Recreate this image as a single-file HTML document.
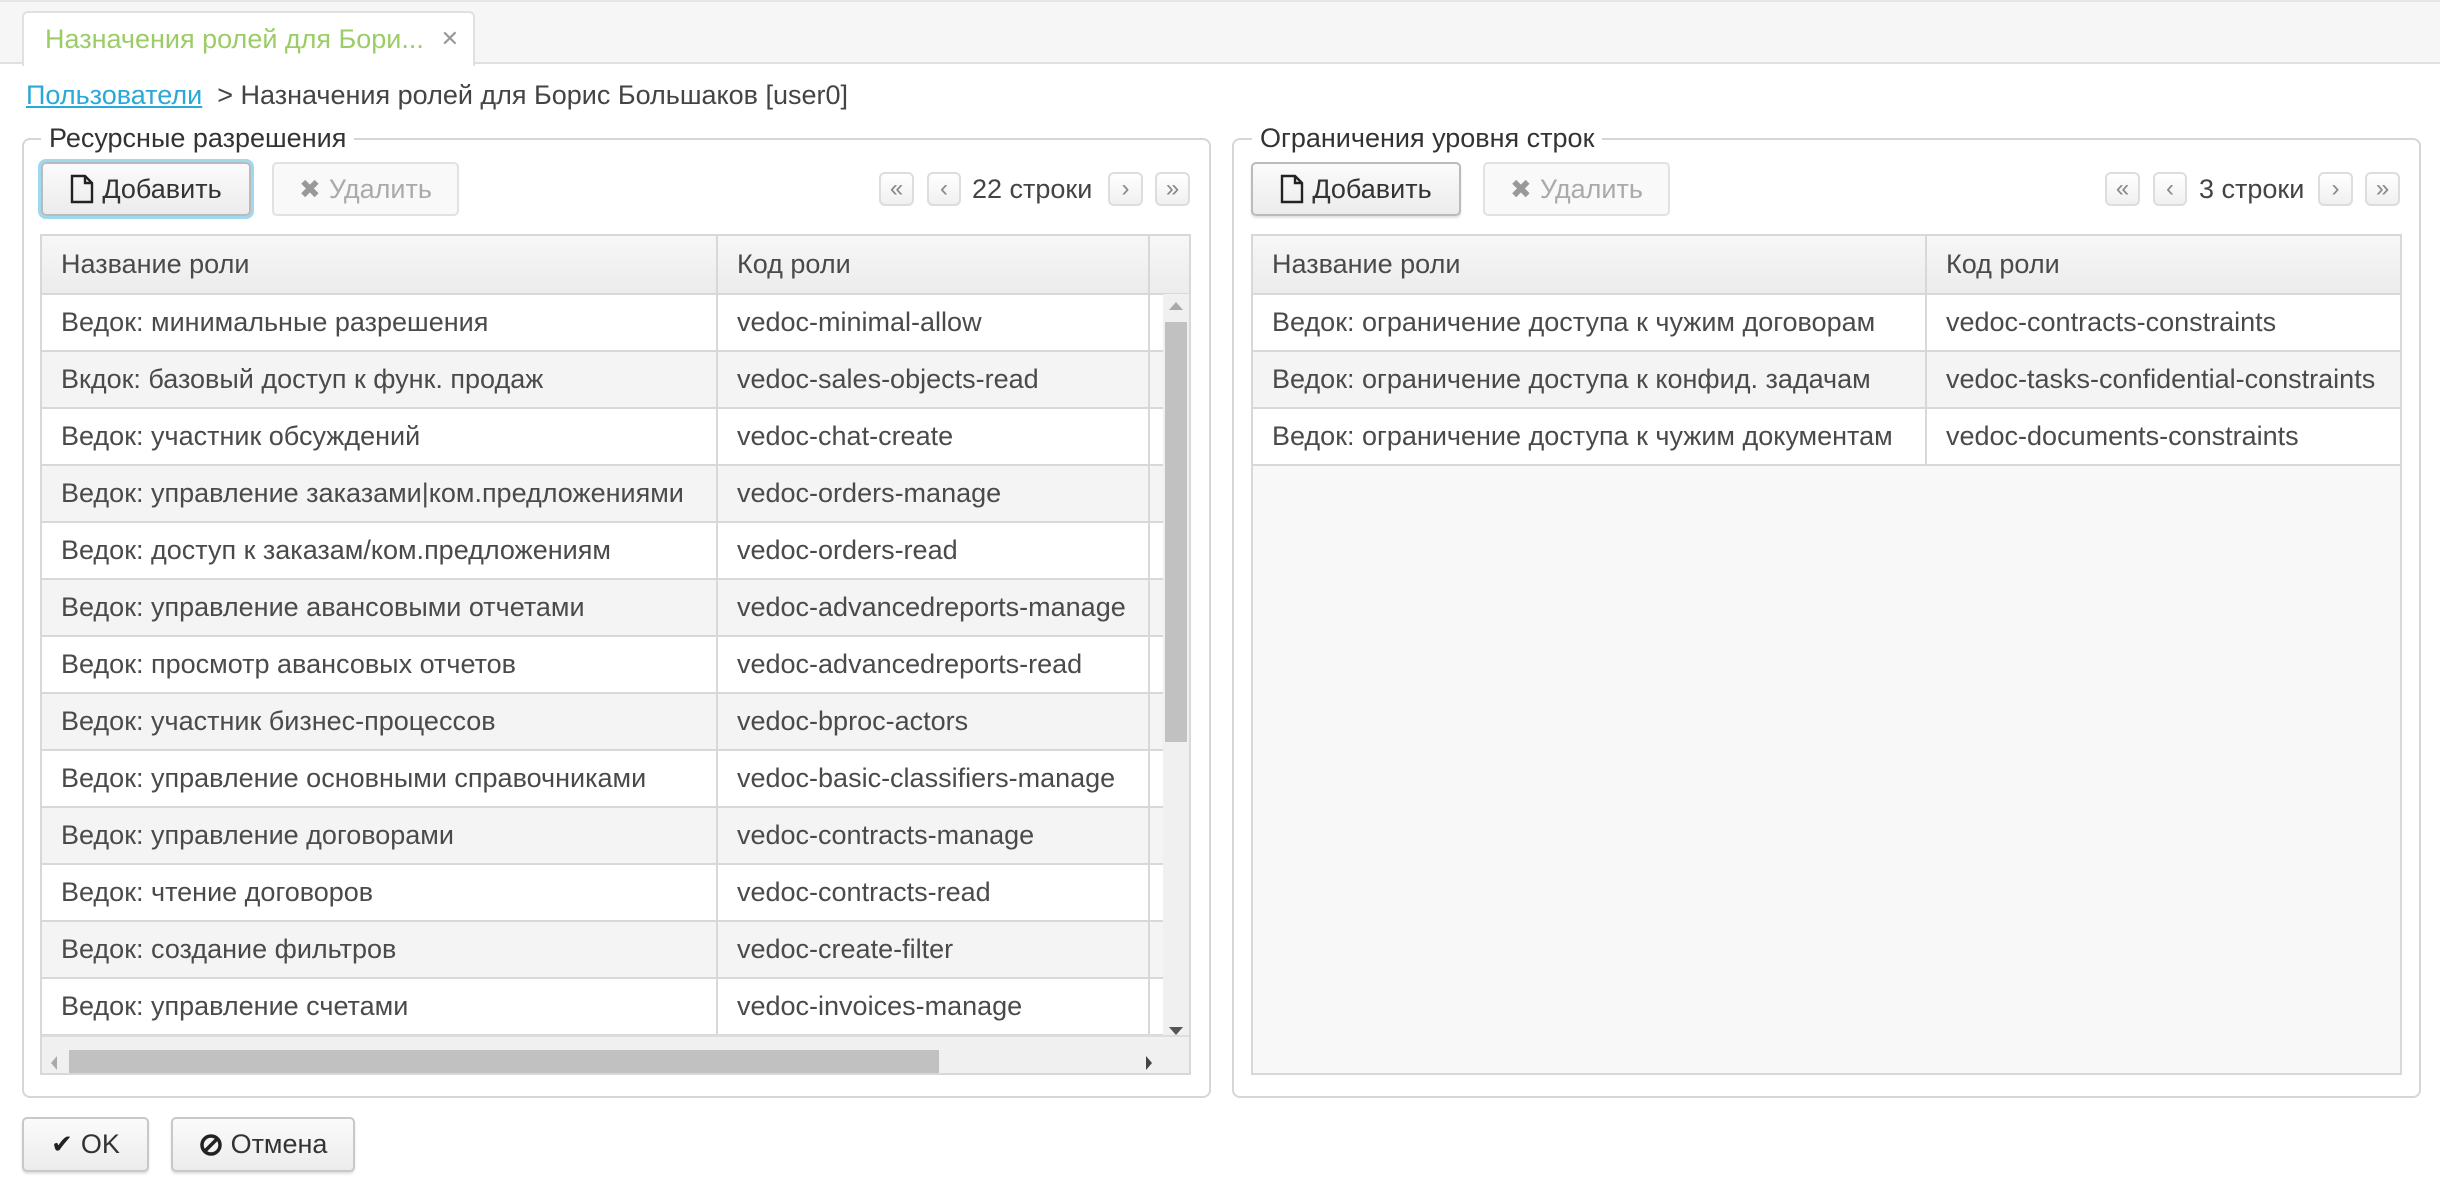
<!DOCTYPE html>
<html><head><meta charset="utf-8"><style>
*{box-sizing:border-box;margin:0;padding:0}
body{width:2440px;height:1189px;background:#fff;font-family:"Liberation Sans","DejaVu Sans",sans-serif;color:#4a4a4a;position:relative;overflow:hidden}
.a{position:absolute}
.tabbar{left:0;top:0;width:2440px;height:64px;background:#f6f6f6;border-bottom:2px solid #e0e0e0;border-top:2px solid #e6e6e6}
.tab{left:22px;top:11px;width:453px;height:55px;background:#fff;border:2px solid #e0e0e0;border-bottom:none;border-radius:6px 6px 0 0;font-size:27px;color:#9ccc65;padding:11px 0 0 21px;white-space:nowrap}
.tab span{position:absolute;right:14px;top:13px;color:#999;font-size:22px}
.fs{border:2px solid #d6d6d6;border-radius:8px}
.leg{background:#fff;font-size:27px;color:#333;padding:0 8px;line-height:32px}
.btn{border:2px solid #c8c8c8;border-radius:5px;background:linear-gradient(#fbfbfb,#ececec);font-size:27px;color:#333;display:flex;align-items:center;justify-content:center;gap:8px;box-shadow:0 2px 2px rgba(0,0,0,.12)}
.btn.dis{color:#aaa;border-color:#e2e2e2;background:#f9f9f9;box-shadow:none}
.pb{border:2px solid #ddd;border-radius:6px;background:linear-gradient(#fff,#f0f0f0);font-size:24px;color:#888;text-align:center;line-height:30px}
.pt{font-size:27px;color:#444;line-height:34px}
table{border-collapse:collapse;font-size:27px;color:#4a4a4a;table-layout:fixed}
td,th{border:2px solid #d8d8d8;padding:0 0 0 19px;text-align:left;font-weight:normal;white-space:nowrap;overflow:hidden;height:57px}
th{height:59px;background:linear-gradient(#f7f7f7,#ececec)}
tr:nth-child(odd) td{background:#f4f4f4}
</style></head><body>
<div class="a tabbar"></div>
<div class="a tab">Назначения ролей для Бори...<span>✕</span></div>
<div class="a" style="left:26px;top:78px;font-size:27px;line-height:34px;white-space:nowrap"><span style="color:#2aa8d8;text-decoration:underline">Пользователи</span><span style="color:#444"> &nbsp;&gt; Назначения ролей для Борис Большаков [user0]</span></div>

<!-- left -->
<div class="a fs" style="left:22px;top:138px;width:1189px;height:960px"></div>
<div class="a leg" style="left:41px;top:122px">Ресурсные разрешения</div>
<div class="a btn" style="left:41px;top:162px;width:210px;height:54px;border-color:#bbb;box-shadow:0 0 0 3px #9fd8ef">
<svg width="24" height="30" viewBox="0 0 24 30"><path d="M2 2h13l7 7v19H2z M15 2v7h7" fill="none" stroke="#222" stroke-width="2.4"/></svg>Добавить</div>
<div class="a btn dis" style="left:272px;top:162px;width:187px;height:54px"><span style="font-size:26px;color:#999">✖</span>Удалить</div>
<div class="a pb" style="left:879px;top:172px;width:35px;height:34px">«</div>
<div class="a pb" style="left:927px;top:172px;width:34px;height:34px">‹</div>
<div class="a pt" style="left:972px;top:172px">22 строки</div>
<div class="a pb" style="left:1108px;top:172px;width:35px;height:34px">›</div>
<div class="a pb" style="left:1155px;top:172px;width:35px;height:34px">»</div>

<div class="a" style="left:40px;top:234px;width:1151px;height:841px;border:2px solid #d8d8d8;overflow:hidden;background:#fff">
<table style="width:1150px;margin:-2px 0 0 -2px">
<colgroup><col style="width:676px"><col style="width:432px"><col style="width:42px"></colgroup>
<tr><th>Название роли</th><th>Код роли</th><th style="padding:0"></th></tr>
<tr><td>Ведок: минимальные разрешения</td><td>vedoc-minimal-allow</td><td></td></tr>
<tr><td>Вкдок: базовый доступ к функ. продаж</td><td>vedoc-sales-objects-read</td><td></td></tr>
<tr><td>Ведок: участник обсуждений</td><td>vedoc-chat-create</td><td></td></tr>
<tr><td>Ведок: управление заказами|ком.предложениями</td><td>vedoc-orders-manage</td><td></td></tr>
<tr><td>Ведок: доступ к заказам/ком.предложениям</td><td>vedoc-orders-read</td><td></td></tr>
<tr><td>Ведок: управление авансовыми отчетами</td><td>vedoc-advancedreports-manage</td><td></td></tr>
<tr><td>Ведок: просмотр авансовых отчетов</td><td>vedoc-advancedreports-read</td><td></td></tr>
<tr><td>Ведок: участник бизнес-процессов</td><td>vedoc-bproc-actors</td><td></td></tr>
<tr><td>Ведок: управление основными справочниками</td><td>vedoc-basic-classifiers-manage</td><td></td></tr>
<tr><td>Ведок: управление договорами</td><td>vedoc-contracts-manage</td><td></td></tr>
<tr><td>Ведок: чтение договоров</td><td>vedoc-contracts-read</td><td></td></tr>
<tr><td>Ведок: создание фильтров</td><td>vedoc-create-filter</td><td></td></tr>
<tr><td>Ведок: управление счетами</td><td>vedoc-invoices-manage</td><td></td></tr>
<tr><td></td><td></td><td></td></tr>
</table>
</div>
<!-- v scrollbar -->
<div class="a" style="left:1163px;top:294px;width:26px;height:741px;background:#f0f0f0"></div>
<div class="a" style="left:1165px;top:322px;width:22px;height:420px;background:#c1c1c1"></div>
<div class="a" style="left:1169px;top:302px;width:0;height:0;border-left:7px solid transparent;border-right:7px solid transparent;border-bottom:8px solid #aaa"></div>
<div class="a" style="left:1169px;top:1027px;width:0;height:0;border-left:7px solid transparent;border-right:7px solid transparent;border-top:8px solid #555"></div>
<!-- h scrollbar -->
<div class="a" style="left:42px;top:1035px;width:1147px;height:38px;background:#f0f0f0;border-top:2px solid #ddd"></div>
<div class="a" style="left:69px;top:1050px;width:870px;height:23px;background:#c1c1c1"></div>
<div class="a" style="left:51px;top:1056px;width:0;height:0;border-top:7px solid transparent;border-bottom:7px solid transparent;border-right:6px solid #aaa"></div>
<div class="a" style="left:1146px;top:1056px;width:0;height:0;border-top:7px solid transparent;border-bottom:7px solid transparent;border-left:6px solid #444"></div>

<!-- right -->
<div class="a fs" style="left:1232px;top:138px;width:1189px;height:960px"></div>
<div class="a leg" style="left:1252px;top:122px">Ограничения уровня строк</div>
<div class="a btn" style="left:1251px;top:162px;width:210px;height:54px;border-color:#bbb">
<svg width="24" height="30" viewBox="0 0 24 30"><path d="M2 2h13l7 7v19H2z M15 2v7h7" fill="none" stroke="#222" stroke-width="2.4"/></svg>Добавить</div>
<div class="a btn dis" style="left:1483px;top:162px;width:187px;height:54px"><span style="font-size:26px;color:#999">✖</span>Удалить</div>
<div class="a pb" style="left:2105px;top:172px;width:35px;height:34px">«</div>
<div class="a pb" style="left:2153px;top:172px;width:34px;height:34px">‹</div>
<div class="a pt" style="left:2199px;top:172px">3 строки</div>
<div class="a pb" style="left:2318px;top:172px;width:35px;height:34px">›</div>
<div class="a pb" style="left:2365px;top:172px;width:35px;height:34px">»</div>

<div class="a" style="left:1251px;top:234px;width:1151px;height:841px;border:2px solid #d8d8d8;overflow:hidden;background:#f8f8f8">
<table style="width:1150px;margin:-2px 0 0 -2px;background:#fff">
<colgroup><col style="width:674px"><col style="width:476px"></colgroup>
<tr><th>Название роли</th><th>Код роли</th></tr>
<tr><td>Ведок: ограничение доступа к чужим договорам</td><td>vedoc-contracts-constraints</td></tr>
<tr><td>Ведок: ограничение доступа к конфид. задачам</td><td>vedoc-tasks-confidential-constraints</td></tr>
<tr><td>Ведок: ограничение доступа к чужим документам</td><td>vedoc-documents-constraints</td></tr>
</table>
</div>

<div class="a btn" style="left:22px;top:1117px;width:127px;height:55px"><span style="font-size:26px;color:#222">✔</span>OK</div>
<div class="a btn" style="left:171px;top:1117px;width:184px;height:55px"><svg width="24" height="24" viewBox="0 0 24 24"><circle cx="12" cy="12" r="9" fill="none" stroke="#222" stroke-width="3.5"/><path d="M5.5 18.5L18.5 5.5" stroke="#222" stroke-width="3.5"/></svg>Отмена</div>
</body></html>
